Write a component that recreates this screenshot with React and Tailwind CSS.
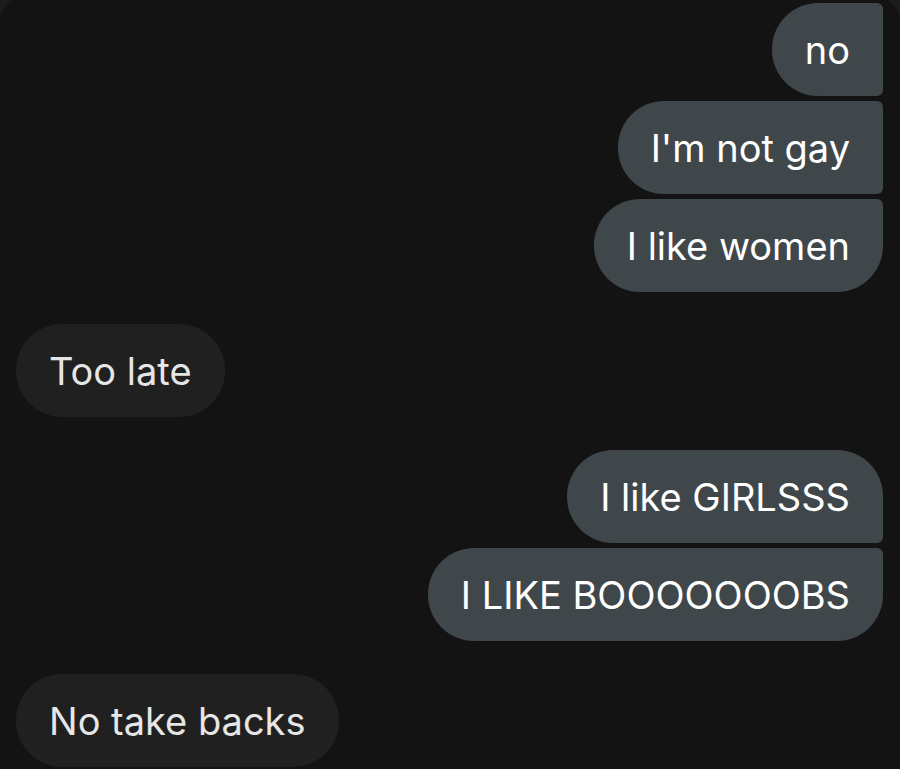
export default function App() {
  const sent = "bg-[#40474b] text-white";
  const recv = "bg-[#202020] text-[#e6e6e6]";
  const base = "h-[93px] px-[33px] flex items-center text-[38px] leading-none whitespace-nowrap";
  return (
    <div className="h-[769px] w-[900px] overflow-hidden bg-[#1c1c1c]" style={{ fontFamily: "Inter, Roboto, 'Noto Sans', sans-serif" }}>
      <div className="-mt-[10px] -mx-[5px] h-[800px] rounded-t-[45px] bg-[#131313] pl-[21px] pr-[22px] pt-[13px] flex flex-col">
        <div className="flex flex-col items-end gap-[5px]">
          <div className={`${base} ${sent} rounded-l-[46px] rounded-r-[6px]`}>no</div>
          <div className={`${base} ${sent} rounded-l-[46px] rounded-r-[6px]`}>I'm not gay</div>
          <div className={`${base} ${sent} rounded-l-[46px] rounded-tr-[6px] rounded-br-[46px]`}>I like women</div>
        </div>
        <div className="mt-[32px] flex">
          <div className={`${base} ${recv} rounded-[46px]`}>Too late</div>
        </div>
        <div className="mt-[33px] flex flex-col items-end gap-[5px]">
          <div className={`${base} ${sent} rounded-l-[46px] rounded-tr-[46px] rounded-br-[6px]`}>I like GIRLSSS</div>
          <div className={`${base} ${sent} rounded-l-[46px] rounded-tr-[6px] rounded-br-[46px]`}>I LIKE BOOOOOOOBS</div>
        </div>
        <div className="mt-[33px] flex">
          <div className={`${base} ${recv} rounded-[46px]`}>No take backs</div>
        </div>
      </div>
    </div>
  );
}
